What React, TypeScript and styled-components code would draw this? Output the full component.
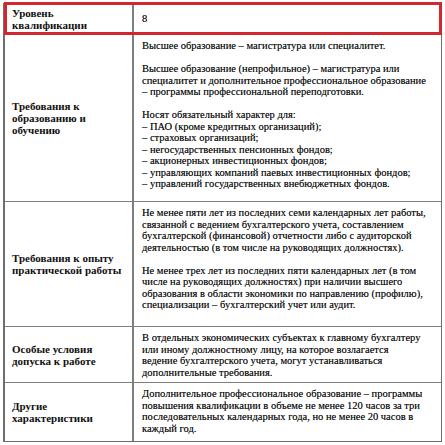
import React from 'react';
import styled, {createGlobalStyle} from 'styled-components';

const Global = createGlobalStyle`
	html, body {
		margin: 0;
		padding: 0;
		background: #fff;
	}
`;

const Page = styled.div`
	width: 445px;
	height: 445px;
	padding: 3px 2px 2px 3px;
	box-sizing: border-box;
	overflow: hidden;
	font-family: "Liberation Serif", "DejaVu Serif", serif;
	color: #141414;
`;

const Table = styled.div`
	border: 1px solid #6e6e6e;
	border-top: none;
	border-left-width: 2px;
	width: 439px;
	box-sizing: border-box;
`;

const Row = styled.div<{$marked?: boolean; $height: number}>`
	display: grid;
	grid-template-columns: 127px 1fr;
	height: ${p => p.$height}px;
	box-sizing: border-box;
	border-top: 1px solid #7e7e7e;
	outline: ${p => (p.$marked ? '3px solid #d3262f' : 'none')};
	outline-offset: -2px;
	position: relative;
	z-index: ${p => (p.$marked ? 1 : 0)};
`;

const Label = styled.div`
	display: flex;
	align-items: center;
	padding: 0 7px;
	font-family: "Liberation Serif", "DejaVu Serif", serif;
	font-weight: bold;
	font-size: 11px;
	line-height: 12px;
	color: #111;
`;

const Cell = styled.div<{$center?: boolean}>`
	display: flex;
	flex-direction: column;
	justify-content: ${p => (p.$center ? 'center' : 'flex-start')};
	border-left: 2px solid #7e7e7e;
	padding: ${p => (p.$center ? '0 4px 0 8px' : '5px 4px 0 8px')};
	font-family: "Liberation Serif", "DejaVu Serif", serif;
	font-size: 10.5px;
	line-height: 11.5px;
	white-space: nowrap;
	text-shadow: 0 0 0.15px rgba(0, 0, 0, 0.6);
`;

const Para = styled.p<{$gap?: boolean}>`
	margin: 0 0 ${p => (p.$gap ? '11.5px' : '0')};
`;

const App = (): JSX.Element => (
	<>
		<Global/>
		<Page>
			<Table>
				<Row $marked $height={31}>
					<Label>Уровень<br/>квалификации</Label>
					<Cell $center>8</Cell>
				</Row>
				<Row $height={167}>
					<Label>Требования к<br/>образованию и<br/>обучению</Label>
					<Cell>
						<Para $gap>Высшее образование – магистратура или специалитет.</Para>
						<Para $gap>
							Высшее образование (непрофильное) – магистратура или<br/>
							специалитет и дополнительное профессиональное образование<br/>
							– программы профессиональной переподготовки.
						</Para>
						<Para>Носят обязательный характер для:</Para>
						<Para>– ПАО (кроме кредитных организаций);</Para>
						<Para>– страховых организаций;</Para>
						<Para>– негосударственных пенсионных фондов;</Para>
						<Para>– акционерных инвестиционных фондов;</Para>
						<Para>– управляющих компаний паевых инвестиционных фондов;</Para>
						<Para>– управлений государственных внебюджетных фондов.</Para>
					</Cell>
				</Row>
				<Row $height={125}>
					<Label>Требования к опыту<br/>практической работы</Label>
					<Cell>
						<Para $gap>
							Не менее пяти лет из последних семи календарных лет работы,<br/>
							связанной с ведением бухгалтерского учета, составлением<br/>
							бухгалтерской (финансовой) отчетности либо с аудиторской<br/>
							деятельностью (в том числе на руководящих должностях).
						</Para>
						<Para>
							Не менее трех лет из последних пяти календарных лет (в том<br/>
							числе на руководящих должностях) при наличии высшего<br/>
							образования в области экономики по направлению (профилю),<br/>
							специализации – бухгалтерский учет или аудит.
						</Para>
					</Cell>
				</Row>
				<Row $height={56}>
					<Label>Особые условия<br/>допуска к работе</Label>
					<Cell>
						<Para>
							В отдельных экономических субъектах к главному бухгалтеру<br/>
							или иному должностному лицу, на которое возлагается<br/>
							ведение бухгалтерского учета, могут устанавливаться<br/>
							дополнительные требования.
						</Para>
					</Cell>
				</Row>
				<Row $height={59}>
					<Label>Другие<br/>характеристики</Label>
					<Cell>
						<Para>
							Дополнительное профессиональное образование – программы<br/>
							повышения квалификации в объеме не менее 120 часов за три<br/>
							последовательных календарных года, но не менее 20 часов в<br/>
							каждый год.
						</Para>
					</Cell>
				</Row>
			</Table>
		</Page>
	</>
);

export default App;
